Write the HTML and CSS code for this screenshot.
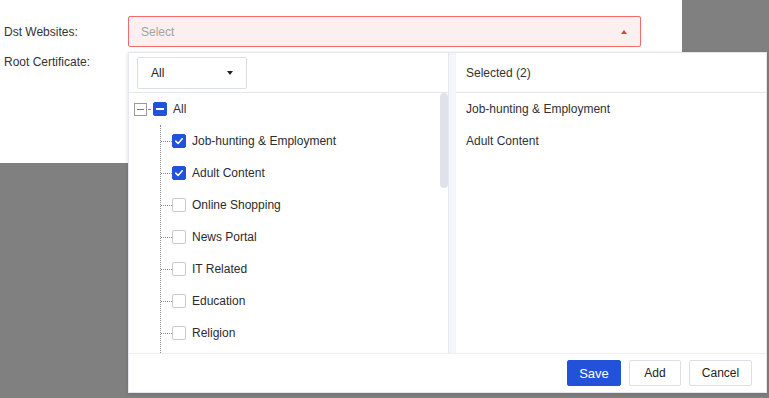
FILE: index.html
```html
<!DOCTYPE html>
<html lang="en">
<head>
    <meta charset="UTF-8">
    <meta name="viewport" content="width=device-width, initial-scale=1.0">
    <title>Dst Websites</title>
    <link rel="stylesheet" href="styles.css">
</head>
<body>
    <div class="page">
        <div class="form">
            <div class="form-row">
                <label class="form-label">Dst Websites:</label>
                <div class="select is-error">
                    <span class="select-placeholder">Select</span>
                    <span class="caret-up"></span>
                </div>
            </div>
            <div class="form-row second">
                <label class="form-label">Root Certificate:</label>
            </div>
        </div>

        <div class="popup">
            <div class="popup-body">
                <div class="panel left">
                    <div class="panel-head">
                        <div class="mini-select">
                            <span>All</span>
                            <span class="caret-down"></span>
                        </div>
                    </div>
                    <div class="tree-wrap">
                        <div class="tree">
                            <div class="tree-root">
                                <span class="expander"></span>
                                <span class="branch short"></span>
                                <span class="check half"></span>
                                <span class="tree-label">All</span>
                            </div>
                            <div class="tree-children">
                                <div class="tree-node"><span class="branch"></span><span class="check on"><svg viewBox="0 0 14 14"><path d="M3.2 7.2 L6 9.8 L10.8 4.4" fill="none" stroke="#fff" stroke-width="1.8" stroke-linecap="round" stroke-linejoin="round"/></svg></span><span class="tree-label">Job-hunting &amp; Employment</span></div>
                                <div class="tree-node"><span class="branch"></span><span class="check on"><svg viewBox="0 0 14 14"><path d="M3.2 7.2 L6 9.8 L10.8 4.4" fill="none" stroke="#fff" stroke-width="1.8" stroke-linecap="round" stroke-linejoin="round"/></svg></span><span class="tree-label">Adult Content</span></div>
                                <div class="tree-node"><span class="branch"></span><span class="check"></span><span class="tree-label">Online Shopping</span></div>
                                <div class="tree-node"><span class="branch"></span><span class="check"></span><span class="tree-label">News Portal</span></div>
                                <div class="tree-node"><span class="branch"></span><span class="check"></span><span class="tree-label">IT Related</span></div>
                                <div class="tree-node"><span class="branch"></span><span class="check"></span><span class="tree-label">Education</span></div>
                                <div class="tree-node"><span class="branch"></span><span class="check"></span><span class="tree-label">Religion</span></div>
                                <div class="tree-node"><span class="branch"></span></div>
                            </div>
                        </div>
                        <div class="scroll-track"><div class="scroll-thumb"></div></div>
                    </div>
                </div>
                <div class="gutter"></div>
                <div class="panel right">
                    <div class="panel-head">Selected (2)</div>
                    <div class="selected-list">
                        <div class="selected-item">Job-hunting &amp; Employment</div>
                        <div class="selected-item">Adult Content</div>
                    </div>
                </div>
            </div>
            <div class="popup-foot">
                <button class="btn primary save">Save</button>
                <button class="btn add">Add</button>
                <button class="btn cancel">Cancel</button>
            </div>
        </div>
    </div>
</body>
</html>
```

FILE: styles.css
```css
body {
    margin: 0;
    font-family: "Liberation Sans", Arial, sans-serif;
    font-size: 12px;
    color: #303133;
    background: #808080;
}
.page {
    position: relative;
    width: 769px;
    height: 398px;
    overflow: hidden;
}
.form {
    width: 682px;
    height: 163px;
    background: #fff;
    padding-top: 16px;
    box-sizing: border-box;
}
.form-row {
    display: flex;
    align-items: center;
}
.form-row.second {
    margin-top: 7px;
}
.form-label {
    width: 124px;
    padding-left: 4px;
    line-height: 16px;
    color: #333;
}
.select {
    width: 513px;
    height: 31px;
    box-sizing: border-box;
    display: flex;
    align-items: center;
    justify-content: space-between;
    padding: 0 13px 0 12px;
    border: 1px solid #f26b6b;
    border-radius: 2px;
    background: #fbefef;
}
.select-placeholder {
    color: #a0a3a8;
}
.caret-up {
    width: 0;
    height: 0;
    border-left: 3px solid transparent;
    border-right: 3px solid transparent;
    border-bottom: 4px solid #e33a3a;
}
.caret-down {
    width: 0;
    height: 0;
    border-left: 3.5px solid transparent;
    border-right: 3.5px solid transparent;
    border-top: 4px solid #222;
}

/* dropdown */
.popup {
    position: absolute;
    left: 128px;
    top: 52px;
    width: 639px;
    height: 341px;
    box-sizing: border-box;
    background: #fff;
    border: 1px solid #e4e7ed;
    box-shadow: 0 1px 4px rgba(0, 0, 0, 0.15);
    display: flex;
    flex-direction: column;
}
.popup-body {
    display: flex;
    height: 300px;
    border-bottom: 1px solid #ebeef5;
}
.panel {
    display: flex;
    flex-direction: column;
}
.panel.left {
    width: 319px;
}
.panel.right {
    flex: 1;
}
.gutter {
    width: 7px;
    background: #f5f6fb;
    border-left: 1px solid #e6e8f0;
}
.panel-head {
    height: 39px;
    flex-shrink: 0;
    border-bottom: 1px solid #e4e7ed;
    display: flex;
    align-items: center;
    padding-left: 8px;
}
.panel.right .panel-head {
    padding-left: 10px;
}
.mini-select {
    width: 110px;
    height: 32px;
    box-sizing: border-box;
    border: 1px solid #dcdfe6;
    border-radius: 2px;
    display: flex;
    align-items: center;
    justify-content: space-between;
    padding: 0 13px 0 13px;
    color: #222;
}
.tree-wrap {
    flex: 1;
    display: flex;
    overflow: hidden;
}
.tree {
    flex: 1;
    overflow: hidden;
}
.scroll-track {
    width: 8px;
    flex-shrink: 0;
}
.scroll-thumb {
    height: 95px;
    background: #dfe2e9;
    border-radius: 4px;
}
.tree-root {
    display: flex;
    align-items: center;
    height: 32px;
    padding-left: 5px;
}
.tree-node {
    display: flex;
    align-items: center;
    height: 32px;
}
.tree-children {
    margin-left: 31px;
    border-left: 1px dotted #8a8a8a;
}
.expander {
    width: 13px;
    height: 13px;
    box-sizing: border-box;
    border: 1px solid #9a9a9a;
    display: flex;
    align-items: center;
    justify-content: center;
}
.expander::after {
    content: "";
    width: 7px;
    height: 1px;
    background: #777;
}
.branch {
    width: 11px;
    border-top: 1px dotted #8a8a8a;
}
.branch.short {
    width: 2px;
    margin: 0 3px 0 1px;
}
.check {
    width: 14px;
    height: 14px;
    box-sizing: border-box;
    border: 1px solid #c8cad0;
    border-radius: 2px;
    background: #fff;
    display: flex;
    align-items: center;
    justify-content: center;
    margin-right: 6px;
}
.check svg {
    width: 14px;
    height: 14px;
}
.check.on,
.check.half {
    background: #2152d9;
    border-color: #2152d9;
}
.check.half::after {
    content: "";
    width: 8px;
    height: 2px;
    background: #fff;
}
.tree-label {
    color: #2a2c30;
}
.selected-item {
    height: 32px;
    line-height: 32px;
    padding-left: 10px;
}
.popup-foot {
    flex: 1;
    display: flex;
    align-items: center;
    justify-content: flex-end;
    gap: 8px;
    padding-right: 14px;
}
.btn {
    height: 26px;
    padding: 0;
    box-sizing: border-box;
    font-family: "Liberation Sans", Arial, sans-serif;
    font-size: 12px;
    color: #222;
    background: #fff;
    border: 1px solid #dcdfe6;
    border-radius: 2px;
}
.btn.save {
    width: 54px;
    font-size: 13px;
}
.btn.add {
    width: 52px;
}
.btn.cancel {
    width: 63px;
}
.btn.primary {
    background: #2152d9;
    border-color: #2152d9;
    color: #fff;
}
```
